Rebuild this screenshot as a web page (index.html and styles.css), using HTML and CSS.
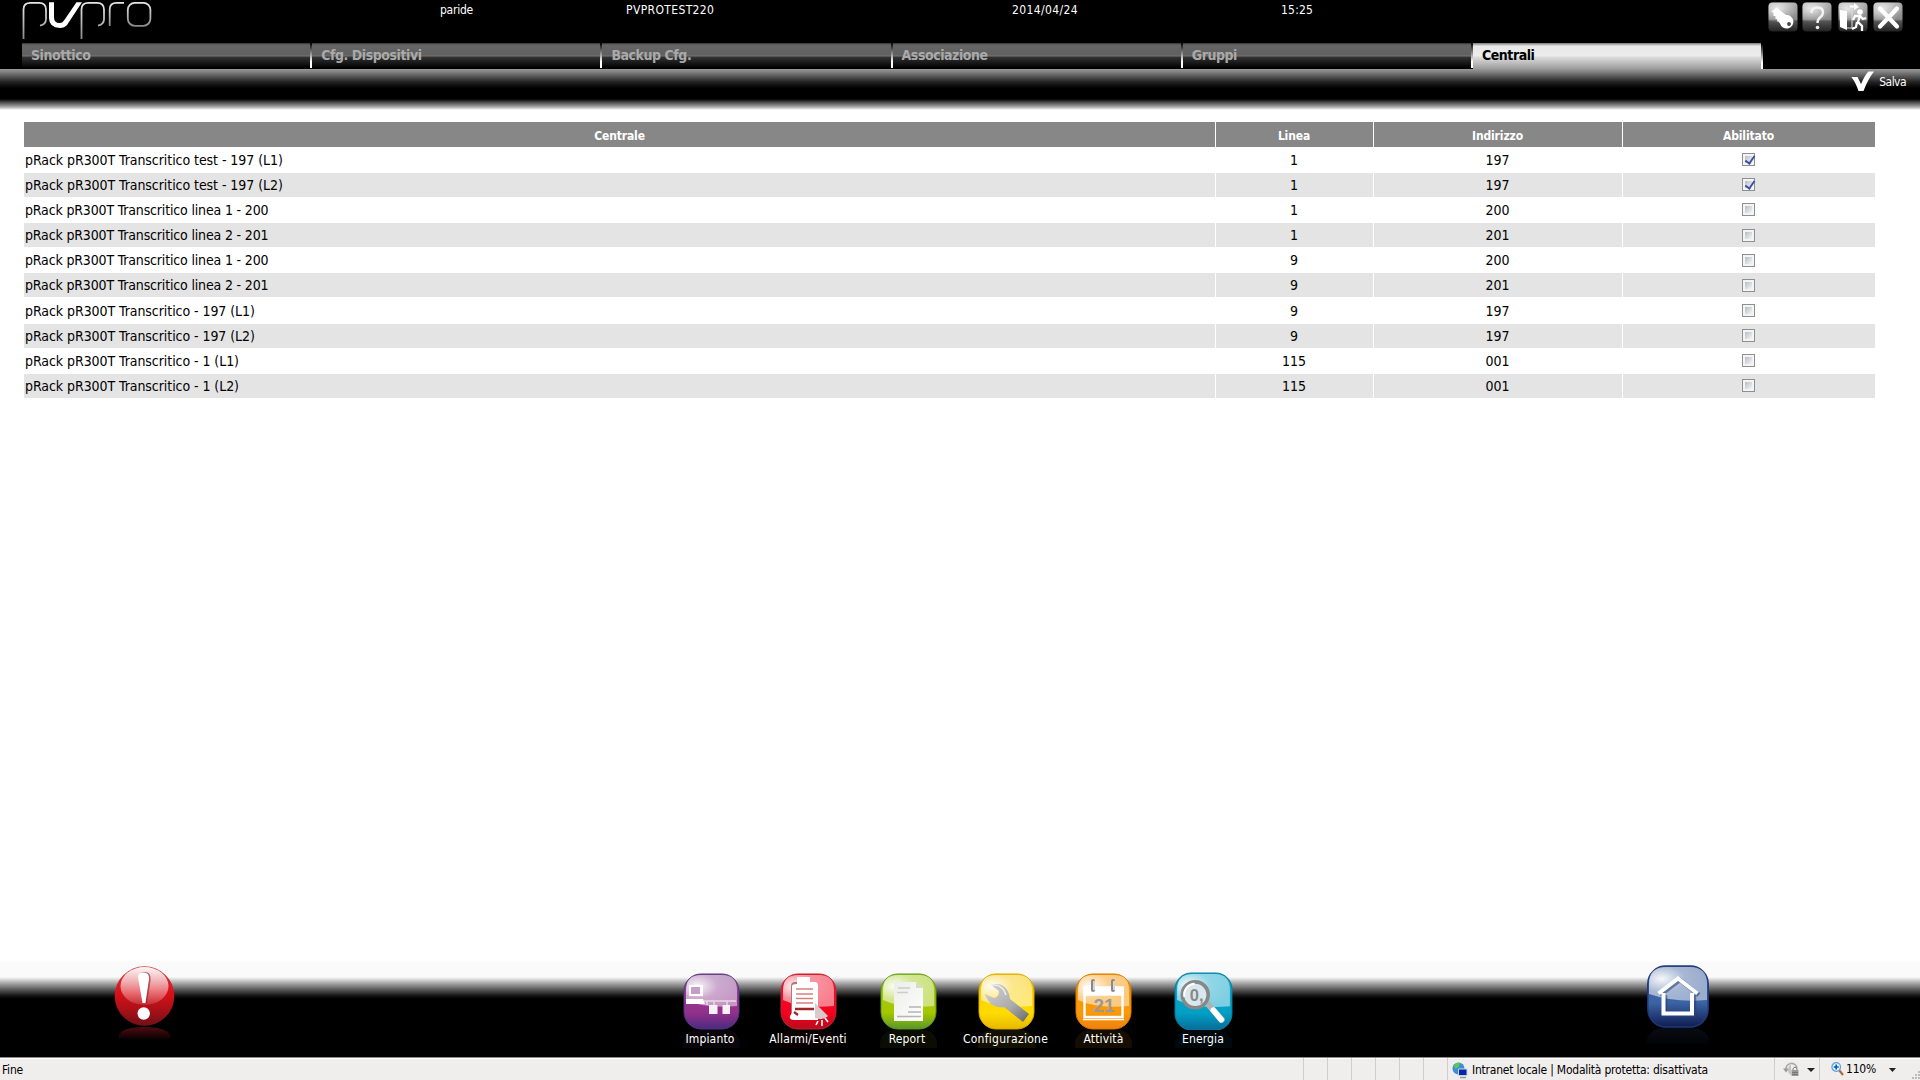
FILE: index.html
```html
<!DOCTYPE html>
<html lang="it">
<head>
<meta charset="utf-8">
<title>pvpro - Centrali</title>
<link rel="stylesheet" href="styles.css">
</head>
<body>
<svg width="0" height="0" class="defs">
  <defs>
    <linearGradient id="btn" x1="0" y1="0" x2="0" y2="1"><stop offset="0" stop-color="#aaa"/><stop offset=".58" stop-color="#8a8a8a"/><stop offset=".64" stop-color="#555"/><stop offset="1" stop-color="#222"/></linearGradient>
    <radialGradient id="btnGlow" cx=".3" cy=".3" r=".7"><stop offset="0" stop-color="#fff" stop-opacity=".75"/><stop offset="1" stop-color="#fff" stop-opacity="0"/></radialGradient>
    <linearGradient id="stroke" x1="0" y1="0" x2="0" y2="1"><stop offset="0" stop-color="#e8e8e8"/><stop offset="1" stop-color="#8a8a8a"/></linearGradient>
    <radialGradient id="shine" cx=".22" cy=".35" r=".8"><stop offset="0" stop-color="#fff" stop-opacity=".95"/><stop offset=".5" stop-color="#fff" stop-opacity=".55"/><stop offset="1" stop-color="#fff" stop-opacity=".48"/></radialGradient>
    <linearGradient id="purple" x1="0" y1="0" x2="0" y2="1"><stop offset="0" stop-color="#8c4a95"/><stop offset=".7" stop-color="#94308c"/><stop offset="1" stop-color="#4a2a80"/></linearGradient>
    <linearGradient id="red" x1="0" y1="0" x2="0" y2="1"><stop offset="0" stop-color="#f0142e"/><stop offset=".7" stop-color="#f5001e"/><stop offset="1" stop-color="#b80c1c"/></linearGradient>
    <linearGradient id="green" x1="0" y1="0" x2="0" y2="1"><stop offset="0" stop-color="#9cc814"/><stop offset=".7" stop-color="#a6c800"/><stop offset="1" stop-color="#5a9628"/></linearGradient>
    <linearGradient id="yellow" x1="0" y1="0" x2="0" y2="1"><stop offset="0" stop-color="#f5c400"/><stop offset=".7" stop-color="#ffdc00"/><stop offset="1" stop-color="#e8b800"/></linearGradient>
    <linearGradient id="orange" x1="0" y1="0" x2="0" y2="1"><stop offset="0" stop-color="#f79400"/><stop offset=".7" stop-color="#fa9a08"/><stop offset="1" stop-color="#f08010"/></linearGradient>
    <linearGradient id="cyan" x1="0" y1="0" x2="0" y2="1"><stop offset="0" stop-color="#10a8c8"/><stop offset=".7" stop-color="#00a0c4"/><stop offset="1" stop-color="#086c98"/></linearGradient>
    <linearGradient id="blue" x1="0" y1="0" x2="0" y2="1"><stop offset="0" stop-color="#3c5c9c"/><stop offset=".6" stop-color="#3c64a4"/><stop offset="1" stop-color="#101c54"/></linearGradient>
    <linearGradient id="ball" x1="0" y1="0" x2="0" y2="1"><stop offset="0" stop-color="#d84048"/><stop offset=".45" stop-color="#d81018"/><stop offset=".7" stop-color="#b01018"/><stop offset="1" stop-color="#701018"/></linearGradient>
    <linearGradient id="ballShine" x1="0" y1="0" x2="0" y2="1"><stop offset="0" stop-color="#fff" stop-opacity=".95"/><stop offset="1" stop-color="#fff" stop-opacity=".12"/></linearGradient>
    <linearGradient id="metal" x1="0" y1="0" x2="1" y2="1"><stop offset="0" stop-color="#d4d4d4"/><stop offset=".6" stop-color="#aaa"/><stop offset="1" stop-color="#666"/></linearGradient>
    <linearGradient id="paper" x1="0" y1="0" x2="1" y2="1"><stop offset="0" stop-color="#eceee8"/><stop offset="1" stop-color="#fff"/></linearGradient>
    <linearGradient id="mirror" x1="0" y1="0" x2="0" y2="1"><stop offset="0" stop-color="#500c10"/><stop offset="1" stop-color="#000"/></linearGradient>
    <linearGradient id="mirrorBlue" x1="0" y1="0" x2="0" y2="1"><stop offset="0" stop-color="#080c14"/><stop offset="1" stop-color="#020305"/></linearGradient>
    <symbol id="gloss" viewBox="0 0 57 57"><path d="M3 27V17Q3 2 18 2H39Q54 2 54 17V33Q22 36 3 27Z" fill="url(#shine)"/></symbol>
    <symbol id="tool" viewBox="0 0 30 30"><rect x=".5" y=".5" width="29" height="29" rx="4" fill="url(#btn)"/><rect x=".5" y=".5" width="29" height="20" rx="4" fill="url(#btnGlow)"/></symbol>
  </defs>
</svg>

<header class="top">
  <svg class="logo" width="140" height="42" viewBox="14 0 140 42" fill="none" stroke="url(#stroke)" stroke-width="1.8">
    <path d="M23.5 39V9.5Q23.5 2.8 30.5 2.8H39Q46 2.8 46 9.5V19Q46 24.5 40 25.6"/>
    <path d="M81.5 39V9.5Q81.5 2.8 88.5 2.8H97Q104 2.8 104 9.5V19Q104 24.5 98 25.6"/>
    <path d="M109.7 26V9.5Q109.7 2.8 116.7 2.8H124"/>
    <rect x="127.8" y="2.8" width="22.6" height="23" rx="7"/>
    <path d="M49 2.2H54V17Q54 23 59.5 23Q62.500 23 64 20.500L76.500 2.200H82L67 25Q64.500 28 60 28Q49 27.500 49 18Z" fill="#fff" stroke="none"/>
  </svg>
  <span class="info user">paride</span>
  <span class="info site">PVPROTEST220</span>
  <span class="info date">2014/04/24</span>
  <span class="info time">15:25</span>
  <div class="tools">
    <svg width="30" height="30" viewBox="0 0 30 30"><use href="#tool"/><path d="M3.500 9.500L8.500 5.500L18 13A6.800 6.800 0 1 1 12 21.500L10.500 19.500L9.500 20L9 17L7.500 17L7.500 14L5.500 14L5.500 11Z" fill="#fff"/><circle cx="21" cy="22" r="1.900" fill="#444"/></svg>
    <svg width="30" height="30" viewBox="0 0 30 30"><use href="#tool"/><path d="M9.500 11Q9.500 5.500 15.500 5.500Q21 5.500 21 10.500Q21 13 18 15.500Q15.500 17.500 15.500 21" fill="none" stroke="#f4f4f4" stroke-width="2.400"/><circle cx="15.500" cy="25.500" r="1.800" fill="#eee"/></svg>
    <svg class="exit" width="30" height="30" viewBox="0 0 30 30"><use href="#tool"/><path d="M2 8L9 9V28L2 25ZM12 3.500H16V1L21 5L16 8V5.500H12Z" fill="#fff"/><path d="M9 8H14V26H9" fill="none" stroke="#ddd"/><circle cx="22" cy="10" r="2.800" fill="#fff"/><path d="M15 18L17 14H22L20 20L24 24V29M19 20L18 25L14 27M22 14L25 17L28 16" fill="none" stroke="#fff" stroke-width="2.300"/></svg>
    <svg width="30" height="30" viewBox="0 0 30 30"><use href="#tool"/><path d="M7 6.500L24 24.500M24 6.500L7 24.500" stroke="#fff" stroke-width="4.300" stroke-linecap="round"/></svg>
  </div>
</header>

<nav class="tabs">
  <a class="tab">Sinottico</a><a class="tab">Cfg. Dispositivi</a><a class="tab">Backup Cfg.</a><a class="tab">Associazione</a><a class="tab">Gruppi</a><a class="tab active">Centrali</a>
</nav>

<div class="actions">
  <svg width="24" height="21" viewBox="0 0 24 21"><path d="M.3 6H6.500L10 13Q14.500 3 17.500 .5H23Q17 8 12.500 20H7.500Q4.500 11 .3 6Z" fill="#fff"/></svg>
  <span class="save">Salva</span>
</div>

<main class="content">
  <div class="row head"><span>Centrale</span><span>Linea</span><span>Indirizzo</span><span>Abilitato</span></div>
  <div class="row"><span>pRack pR300T Transcritico test - 197 (L1)</span><span>1</span><span>197</span><span><i class="box on"></i></span></div>
  <div class="row"><span>pRack pR300T Transcritico test - 197 (L2)</span><span>1</span><span>197</span><span><i class="box on"></i></span></div>
  <div class="row line"><span>pRack pR300T Transcritico linea 1 - 200</span><span>1</span><span>200</span><span><i class="box"></i></span></div>
  <div class="row line"><span>pRack pR300T Transcritico linea 2 - 201</span><span>1</span><span>201</span><span><i class="box"></i></span></div>
  <div class="row line"><span>pRack pR300T Transcritico linea 1 - 200</span><span>9</span><span>200</span><span><i class="box"></i></span></div>
  <div class="row line"><span>pRack pR300T Transcritico linea 2 - 201</span><span>9</span><span>201</span><span><i class="box"></i></span></div>
  <div class="row"><span>pRack pR300T Transcritico - 197 (L1)</span><span>9</span><span>197</span><span><i class="box"></i></span></div>
  <div class="row"><span>pRack pR300T Transcritico - 197 (L2)</span><span>9</span><span>197</span><span><i class="box"></i></span></div>
  <div class="row"><span>pRack pR300T Transcritico - 1 (L1)</span><span>115</span><span>001</span><span><i class="box"></i></span></div>
  <div class="row"><span>pRack pR300T Transcritico - 1 (L2)</span><span>115</span><span>001</span><span><i class="box"></i></span></div>
</main>

<footer class="dock">
  <svg class="alert" width="62" height="78" viewBox="0 0 62 78">
    <circle cx="30.500" cy="30" r="29.800" fill="url(#ball)"/><ellipse cx="30.500" cy="20" rx="24" ry="19" fill="url(#ballShine)"/>
    <path d="M25 11Q25 6 31 6Q37.500 6 36.500 15L33 37H29.500Z" fill="#901820" opacity=".6"/>
    <path d="M24 11Q24 6.500 29.700 6.500Q35.500 6.500 35 13L31.500 37H28.500Z" fill="#fff"/><circle cx="29.700" cy="47.500" r="6.200" fill="#fff"/>
    <path d="M4 73Q4 61 30 61Q57 61 57 73Q30 76 4 73Z" fill="url(#mirror)"/>
  </svg>
  <div class="apps">
    <a class="app purple"><svg width="57" height="57" viewBox="0 0 57 57"><rect x="1" y="1" width="55" height="55" rx="17" fill="url(#purple)" stroke="#4a3a78"/><use href="#gloss"/><path d="M6 12H20V23H6ZM3 26H20L22 31H3Z" fill="#fff"/><path d="M8 14H17V21H8Z" fill="#c4a0c8"/><path d="M21 28H53M24 28V32M31 28V33M44 28V33" stroke="#e6dce8" stroke-width="1.500" fill="none"/><path d="M26 32H34.500V41H26ZM39.500 32H47V41H39.500Z" fill="#f6f2f6"/></svg><span>Impianto</span></a>
    <a class="app red"><svg width="57" height="57" viewBox="0 0 57 57"><rect x="1" y="1" width="55" height="55" rx="17" fill="url(#red)" stroke="#b82838"/><use href="#gloss"/><rect x="11" y="9" width="27" height="38" rx="4" fill="#a87a7a"/><path d="M17 4H30V9H35Q38 9 38 13V47H14Q9 47 10 43L12 40V13Q12 11 17 11Z" fill="#fff"/><path d="M16 16H33M16 21H33M16 25.500H33M16 30H33" stroke="#d88080" stroke-width="1.500"/><path d="M15 36H34M14 39L18 42" stroke="#a02828" stroke-width="2.300"/><path d="M35 30L48 43Q43 48 35 45Z" fill="#d8caca"/><path d="M38 48L36 52M42 47V53M45 45L48 49" stroke="#fff" stroke-width="1.600"/></svg><span>Allarmi/Eventi</span></a>
    <a class="app green"><svg width="57" height="57" viewBox="0 0 57 57"><rect x="1" y="1" width="55" height="55" rx="17" fill="url(#green)" stroke="#5c9628"/><use href="#gloss"/><path d="M14 9H36L43 15V48H14Z" fill="url(#paper)"/><path d="M36 9V15H43Z" fill="#d4dcc8"/><path d="M18 15H30M17 19.500H28" stroke="#ccc" stroke-width="1.500"/><path d="M29 34H41M28 39H41M17 43.500H41" stroke="#b4b4b4" stroke-width="1.700"/></svg><span>Report</span></a>
    <a class="app yellow"><svg width="57" height="57" viewBox="0 0 57 57"><rect x="1" y="1" width="55" height="55" rx="17" fill="url(#yellow)" stroke="#d8a800"/><use href="#gloss"/><path d="M13 12Q26 8 31 21L32 26L51 41L45 49L26 34Q12 36 7 21L16 25Q21 24 21 18Z" fill="url(#metal)"/><path d="M14 12Q25 11 28 22" fill="none" stroke="#eee" stroke-width="1.500"/></svg><span>Configurazione</span></a>
    <a class="app orange"><svg width="57" height="57" viewBox="0 0 57 57"><rect x="1" y="1" width="55" height="55" rx="17" fill="url(#orange)" stroke="#d87c00"/><use href="#gloss"/><rect x="9.500" y="16" width="38" height="28" fill="none" stroke="#fff" stroke-width="2.400"/><path d="M9 14H48V22H9ZM8 46.500H49" fill="#fff" stroke="#fff" stroke-width="1.500"/><path d="M18 8V17M38 8V17" stroke="#888" stroke-width="4" stroke-linecap="round"/><path d="M19 8V17M39 8V17" stroke="#eee" stroke-width="1.500"/><text x="29" y="39" class="day">21</text></svg><span>Attività</span></a>
    <a class="app cyan"><svg width="59" height="59" viewBox="0 0 57 57"><rect x="1" y="1" width="55" height="55" rx="16" fill="url(#cyan)" stroke="#107ca0"/><use href="#gloss"/><path d="M31 29L46 46" stroke="#a8b4b8" stroke-width="6" stroke-linecap="round"/><path d="M38 37L45.500 46" stroke="#fff" stroke-width="5.500" stroke-linecap="round"/><circle cx="20.500" cy="22" r="12.500" fill="#d8e8ec" stroke="#888" stroke-width="3.500"/><path d="M10 24A10.500 10.500 0 0 1 20 11.500" fill="none" stroke="#fff" stroke-width="2"/><text x="22" y="28" class="watt">0,</text></svg><span>Energia</span></a>
  </div>
  <svg class="home" width="62" height="81" viewBox="0 0 62 81">
    <rect x=".8" y="1" width="60.400" height="61" rx="18" fill="url(#blue)" stroke="#203a78" stroke-width="1.500"/>
    <path d="M2 29V19Q2 2 19 2H43Q60 2 60 19V35Q28 38 2 29Z" fill="url(#shine)"/>
    <path d="M12 29L32 14L51 29M17 29V49H46V29" fill="none" stroke="#284078" stroke-width="4.500" opacity=".6" transform="translate(1 1)"/>
    <path d="M11.500 28.500L31 13.500L50.500 28.500M16.500 28V48.500H45V28" fill="none" stroke="#fff" stroke-width="4"/>
    <path d="M0 79V74Q4 63 18 63H44Q58 63 62 74V79Z" fill="url(#mirrorBlue)"/>
  </svg>
</footer>

<div class="status">
  <span class="done">Fine</span>
  <i class="cell"></i><i class="cell"></i><i class="cell"></i><i class="cell"></i><i class="cell"></i><i class="cell"></i>
  <div class="zone">
    <svg width="16" height="17" viewBox="0 0 16 17"><circle cx="6.500" cy="6.500" r="6" fill="#3c8cd8"/><path d="M2 3Q5 0 8 1L7 5L3 7ZM7 7L11 6L10 11L7 11Z" fill="#5cc850"/><path d="M6.500 7H15V13.500H6.500Z" fill="#0828a8" stroke="#c8d4e8"/><path d="M8 15.500H14" stroke="#999" stroke-width="1.500"/></svg>
    <span>Intranet locale | Modalità protetta: disattivata</span>
  </div>
  <div class="filter">
    <svg width="17" height="15" viewBox="0 0 17 15"><path d="M3 8A5.500 5.500 0 0 1 14 6" fill="none" stroke="#aaa" stroke-width="1.600"/><path d="M0 6.500H6L3 10.500Z" fill="#999"/><path d="M8 2V13Q4 11 5 6Z" fill="#c4c4c4"/><rect x="8.500" y="8" width="7" height="6" fill="#999"/><path d="M10 8V6.500Q12 3.500 14 6.500V8M9 10.500H15M9 12.500H15" fill="none" stroke="#777"/></svg>
    <i class="arrow"></i>
  </div>
  <div class="scale">
    <svg width="13" height="14" viewBox="0 0 13 14"><path d="M8 8L12 13" stroke="#b06838" stroke-width="2.200"/><circle cx="5.200" cy="5" r="4.300" fill="#e4f2ff" stroke="#5c9cd8" stroke-width="1.200"/><path d="M5.200 2.500V7.500M2.700 5H7.700" stroke="#0858b8" stroke-width="1.600"/></svg>
    <span>110%</span><i class="arrow"></i>
    <svg class="grip" width="8" height="8" viewBox="0 0 8 8"><path d="M6 0H8V2H6ZM6 3H8V5H6ZM6 6H8V8H6ZM3 3H5V5H3ZM3 6H5V8H3ZM0 6H2V8H0Z" fill="#bbb"/></svg>
  </div>
</div>
</body>
</html>
```
FILE: styles.css
```css
* { box-sizing: border-box; }
body { margin: 0; width: 1920px; height: 1080px; overflow: hidden; display: flex; flex-direction: column; background: #fff; color: #000; font-family: "DejaVu Sans Condensed", "DejaVu Sans", sans-serif; font-stretch: condensed; font-size: 14px; }
svg { display: block; flex: none; }
.defs { position: absolute; }

.top { height: 43px; flex: none; background: #000; color: #fff; display: grid; grid-template-columns: 440px 186px 386px 269px 487px 152px; align-items: start; font-size: 12px; }
.logo { margin-left: 14px; }
.info { line-height: 20px; letter-spacing: -.25px; }
.site, .date { letter-spacing: .37px; }
.time { letter-spacing: .2px; }
.tools { display: flex; padding-top: 2px; gap: 4px; }
.tools .exit { margin: 0 1px 0 2px; }

.tabs { height: 26px; flex: none; background: #000; display: flex; padding-left: 22px; }
.tab { width: 290.2px; height: 25px; padding: 2px 0 0 9px; line-height: 20px; font-size: 14px; font-weight: bold; letter-spacing: -.45px; color: #aaa;
  background: linear-gradient(#000, #fff 75%) right / 2px 100% no-repeat, linear-gradient(#333, #666 2px, #606060 12px, #777 13px, #333 14px, #000) left / calc(100% - 2px) 100% no-repeat; }
.tab.active { color: #000; height: 26px; background: linear-gradient(#000, #fff 75%) right / 2px 25px no-repeat, linear-gradient(#777, #e8e8e8 3px, #ececec 13px, #ddd 14px, #9c9c9c) left / calc(100% - 2px) 100% no-repeat; }

.actions { height: 41px; flex: none; display: flex; justify-content: flex-end; gap: 4px; padding: 2px 14px 0 0; color: #fff; background: linear-gradient(#999 0, #777 4px, #222 13px, #000 19px, #000 30px, #444 33px, #aaa 38px, #fff 41px); }
.save { font-size: 12px; line-height: 22px; letter-spacing: -.55px; }

.content { flex: 1; padding: 12px 45px 0 24px; }
.row { display: grid; grid-template-columns: 1191px 157px 248px 252px; grid-template-rows: 100%; column-gap: 1px; height: 24px; margin-bottom: 1.15px; line-height: 25px; }
.row span { text-align: center; padding-right: 1px; }
.row span:first-child { text-align: left; padding-left: 1px; letter-spacing: -.06px; }
.row.line span:first-child { letter-spacing: -.16px; }
.row:nth-child(odd) span { background: #e4e4e4; }
.row.head { height: 25px; margin-bottom: .7px; line-height: 28px; font-size: 12px; font-weight: bold; color: #fff; }
.row.head span { background: #878787; text-align: center; letter-spacing: -.13px; }
.box { display: block; width: 13px; height: 13px; margin: 5.500px auto 0; border: 1px solid #8e8f8f; background: linear-gradient(135deg, #b8bcc4, #f6f6f6) center / 7px 7px no-repeat, #f4f4f4; }
.box.on::before { content: ""; display: block; width: 4px; height: 8px; margin: 0 0 0 4px; border: solid #3c54a0; border-width: 0 2px 2px 0; transform: rotate(35deg); }

.dock { height: 97px; flex: none; display: flex; color: #fff; background: linear-gradient(#fff 0, #fafafa 3px, #fafafa 17px, #aaa 23px, #555 30px, #111 36px, #000 39px); }
.alert { margin: 6px 0 0 114px; }
.apps { display: grid; grid-template-columns: 97px 96px 104px 92px 103px 96px; margin-left: 487px; padding-top: 13px; }
.app { display: flex; flex-direction: column; align-items: center; font-size: 12px; }
.app span { line-height: 19px; letter-spacing: .15px; width: 57px; height: 18px; display: flex; justify-content: center; border-radius: 14px 14px 0 0; }
.purple span { background: #0a060b; padding-right: 3px; }
.red span { background: #0c0202; }
.green span { background: #0a0d00; padding-right: 2px; }
.yellow span { background: #151100; padding-right: 1px; letter-spacing: .28px; }
.orange span { background: #150d00; }
.cyan span { background: #00090e; }
.cyan svg { margin: -1px 0; }
.home { margin: 4.500px 0 0 395.500px; }
.day { font: bold 19px "Liberation Sans", sans-serif; fill: #999; text-anchor: middle; }
.watt { font: bold 16px "Liberation Sans", sans-serif; fill: #888; text-anchor: middle; }

.status { height: 23px; flex: none; display: flex; background: #f0eded; border-top: 1px solid #8c8888; box-shadow: inset 0 1px #fff; font-size: 12px; line-height: 25px; letter-spacing: -.22px; }
.done { width: 1303px; padding-left: 2px; }
.cell { width: 24px; border-left: 1px solid #d0cdcd; }
.zone, .filter, .scale { display: flex; border-left: 1px solid #d0cdcd; }
.zone { width: 327px; padding-left: 4px; gap: 4px; }
.zone svg, .filter svg, .scale svg { margin-top: 4px; }
.filter { width: 45px; padding-left: 8px; gap: 7px; }
.scale { width: 101px; padding-left: 11px; gap: 2px; }
.scale span { width: 46px; line-height: 22px; }
.arrow { width: 8px; height: 4px; margin-top: 10px; background: #222; clip-path: polygon(0 0, 100% 0, 50% 100%); }
.scale .grip { margin: 13px 0 0 14px; }
```
